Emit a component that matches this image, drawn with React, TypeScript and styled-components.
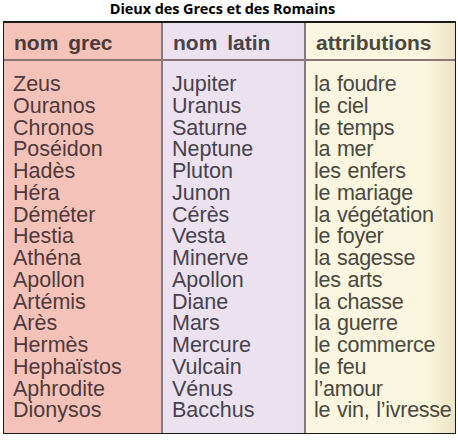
import styled, { createGlobalStyle } from 'styled-components';

const GlobalStyle = createGlobalStyle`
  html, body {
    margin: 0;
    padding: 0;
    background: #ffffff;
  }
`;

interface ColumnData {
  title: string;
  bg: string;
  edge: string;
  ink: string;
  tight?: boolean;
  items: string[];
}

const columns: ColumnData[] = [
  {
    title: 'nom grec',
    bg: '#f5c2ba',
    edge: '#f5c2ba',
    ink: '#4e3a3a',
    items: [
      'Zeus', 'Ouranos', 'Chronos', 'Poséidon', 'Hadès', 'Héra', 'Déméter', 'Hestia',
      'Athéna', 'Apollon', 'Artémis', 'Arès', 'Hermès', 'Hephaïstos', 'Aphrodite', 'Dionysos',
    ],
  },
  {
    title: 'nom latin',
    bg: '#ece1ef',
    edge: '#e9deec',
    ink: '#47424c',
    items: [
      'Jupiter', 'Uranus', 'Saturne', 'Neptune', 'Pluton', 'Junon', 'Cérès', 'Vesta',
      'Minerve', 'Apollon', 'Diane', 'Mars', 'Mercure', 'Vulcain', 'Vénus', 'Bacchus',
    ],
  },
  {
    title: 'attributions',
    bg: '#faf6df',
    edge: '#ece3c4',
    ink: '#4a4840',
    tight: true,
    items: [
      'la foudre', 'le ciel', 'le temps', 'la mer', 'les enfers', 'le mariage', 'la végétation', 'le foyer',
      'la sagesse', 'les arts', 'la chasse', 'la guerre', 'le commerce', 'le feu', 'l’amour', 'le vin, l’ivresse',
    ],
  },
];

const Page = styled.div`
  width: 458px;
  height: 440px;
  box-sizing: border-box;
  padding: 0 2px 6px 3px;
  display: flex;
  flex-direction: column;
`;

const Title = styled.h1`
  margin: 0;
  height: 21px;
  padding-right: 14px;
  text-align: center;
  font-family: "Open Sans", "Liberation Sans", sans-serif;
  font-weight: 700;
  font-size: 14.5px;
  line-height: 17px;
  letter-spacing: -0.1px;
  color: #000;
`;

const Table = styled.div`
  flex: 1;
  display: grid;
  grid-template-columns: 159px 143px 1fr;
  border: 1px solid #1a1a1a;
  border-top-width: 2px;
  overflow: hidden;
`;

const Column = styled.div<{ $bg: string; $edge: string; $divider: boolean }>`
  display: flex;
  flex-direction: column;
  background: linear-gradient(to right, ${({ $bg }) => $bg} 80%, ${({ $edge }) => $edge});
  border-right: ${({ $divider }) => ($divider ? '2px solid #857a80' : 'none')};
  overflow: hidden;
`;

const Header = styled.div<{ $ink: string }>`
  height: 38px;
  box-sizing: border-box;
  padding: 5px 0 0 10px;
  border-bottom: 2px solid #8b7474;
  font-family: "Liberation Sans", Arial, sans-serif;
  font-weight: 700;
  font-size: 21px;
  line-height: 30px;
  word-spacing: 4px;
  color: ${({ $ink }) => $ink};
  white-space: nowrap;
`;

const List = styled.ul<{ $tight?: boolean }>`
  list-style: none;
  margin: 0;
  padding: 13px 0 0 ${({ $tight }) => ($tight ? '8px' : '9px')};
`;

const Item = styled.li<{ $ink: string; $tight?: boolean }>`
  font-family: "Liberation Sans", Arial, sans-serif;
  font-size: 21.5px;
  line-height: 21.75px;
  word-spacing: ${({ $tight }) => ($tight ? '1px' : '3px')};
  letter-spacing: ${({ $tight }) => ($tight ? '-0.25px' : '0')};
  color: ${({ $ink }) => $ink};
  white-space: nowrap;
`;

export default function App() {
  return (
    <>
      <GlobalStyle />
      <Page>
        <Title>Dieux des Grecs et des Romains</Title>
        <Table>
          {columns.map((col, i) => (
            <Column key={col.title} $bg={col.bg} $edge={col.edge} $divider={i < columns.length - 1}>
              <Header $ink={col.ink}>{col.title}</Header>
              <List $tight={col.tight}>
                {col.items.map((item) => (
                  <Item key={item} $ink={col.ink} $tight={col.tight}>{item}</Item>
                ))}
              </List>
            </Column>
          ))}
        </Table>
      </Page>
    </>
  );
}
